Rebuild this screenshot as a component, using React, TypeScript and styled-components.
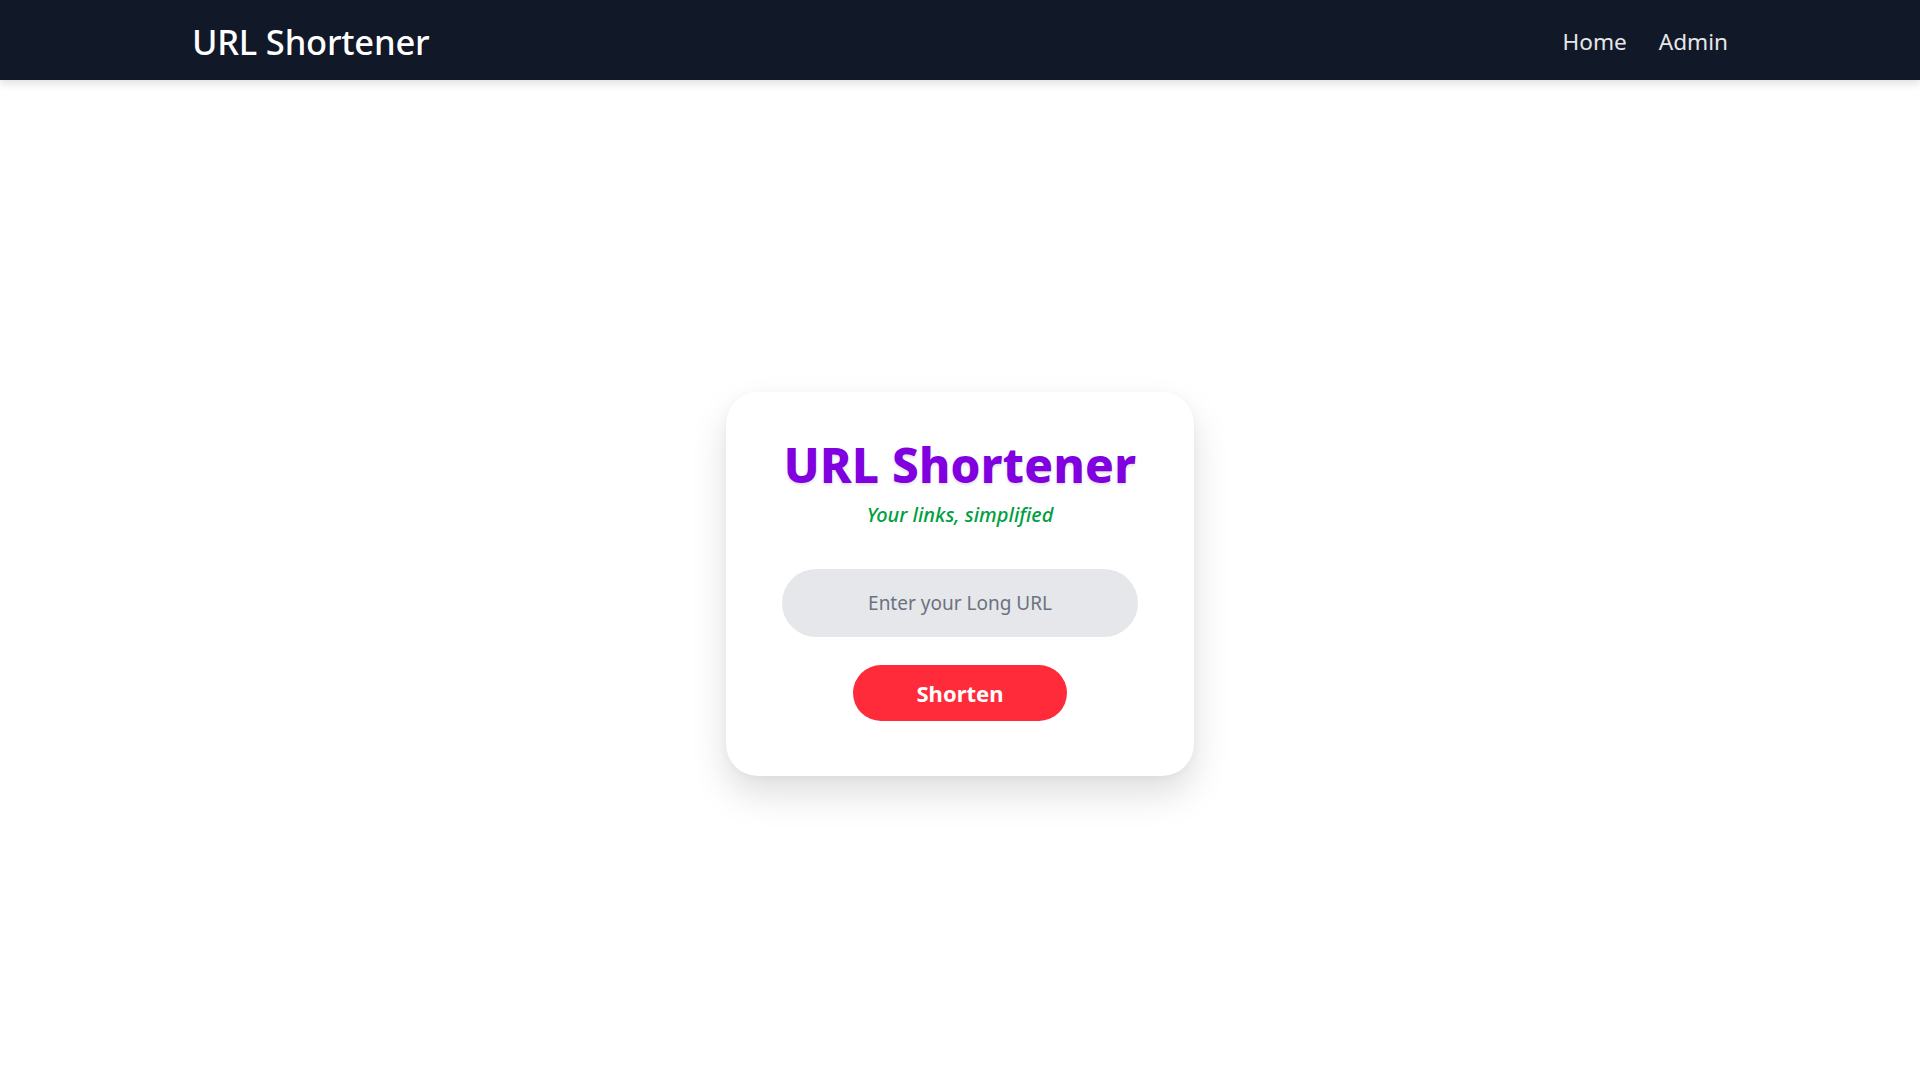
import React from "react";
import styled, { createGlobalStyle } from "styled-components";

const GlobalStyle = createGlobalStyle`
  html, body {
    margin: 0;
    padding: 0;
    background: #ffffff;
    font-family: "Noto Sans", "Open Sans", sans-serif;
  }
  * { box-sizing: border-box; }
`;

const Page = styled.div`
  min-height: 100vh;
  display: flex;
  flex-direction: column;
  background: #ffffff;
`;

const NavBar = styled.header`
  height: 80px;
  background: #111827;
  box-shadow: 0 4px 8px rgba(0, 0, 0, 0.12);
  display: flex;
  align-items: center;
  justify-content: space-between;
  padding: 0 192px 0 192px;
  position: relative;
  z-index: 1;
`;

const Brand = styled.div`
  color: #ffffff;
  font-size: 34.5px;
  font-weight: 500;
  letter-spacing: -0.2px;
  margin-top: 2px;
`;

const NavLinks = styled.nav`
  display: flex;
  gap: 32px;
  margin-top: 2px;
`;

const NavLink = styled.a`
  color: #e5e7eb;
  font-size: 22.6px;
  text-decoration: none;
  cursor: pointer;
`;

const Main = styled.main`
  flex: 1;
  display: flex;
  align-items: center;
  justify-content: center;
  padding-top: 8px;
`;

const Card = styled.section`
  width: 468px;
  background: #ffffff;
  border-radius: 32px;
  box-shadow: 0 18px 36px rgba(0, 0, 0, 0.13), 0 2px 8px rgba(0, 0, 0, 0.04);
  padding: 44px 40px 55px;
  display: flex;
  flex-direction: column;
  align-items: center;
`;

const Title = styled.h1`
  margin: 0;
  color: #8000e0;
  font-size: 47.5px;
  font-weight: 800;
  line-height: 1.2;
  white-space: nowrap;
  letter-spacing: 0.3px;
  text-shadow: 0 2px 3px rgba(0, 0, 0, 0.12);
`;

const Subtitle = styled.p`
  margin: 8px 0 0;
  color: #00a041;
  font-size: 20px;
  font-style: italic;
  font-weight: 500;
`;

const UrlInput = styled.input`
  margin-top: 41px;
  width: 356px;
  height: 68px;
  border: none;
  outline: none;
  border-radius: 9999px;
  background: #e5e7eb;
  text-align: center;
  font-family: inherit;
  font-size: 19px;
  color: #374151;
  &::placeholder {
    color: #6b7280;
  }
`;

const ShortenButton = styled.button`
  margin-top: 28px;
  width: 214px;
  height: 56px;
  border: none;
  border-radius: 9999px;
  background: #ff2b3a;
  color: #ffffff;
  font-family: inherit;
  font-size: 22px;
  font-weight: 700;
  cursor: pointer;
`;

export default function App() {
  return (
    <>
      <GlobalStyle />
      <Page>
        <NavBar>
          <Brand>URL Shortener</Brand>
          <NavLinks>
            <NavLink>Home</NavLink>
            <NavLink>Admin</NavLink>
          </NavLinks>
        </NavBar>
        <Main>
          <Card>
            <Title>URL Shortener</Title>
            <Subtitle>Your links, simplified</Subtitle>
            <UrlInput placeholder="Enter your Long URL" />
            <ShortenButton>Shorten</ShortenButton>
          </Card>
        </Main>
      </Page>
    </>
  );
}
